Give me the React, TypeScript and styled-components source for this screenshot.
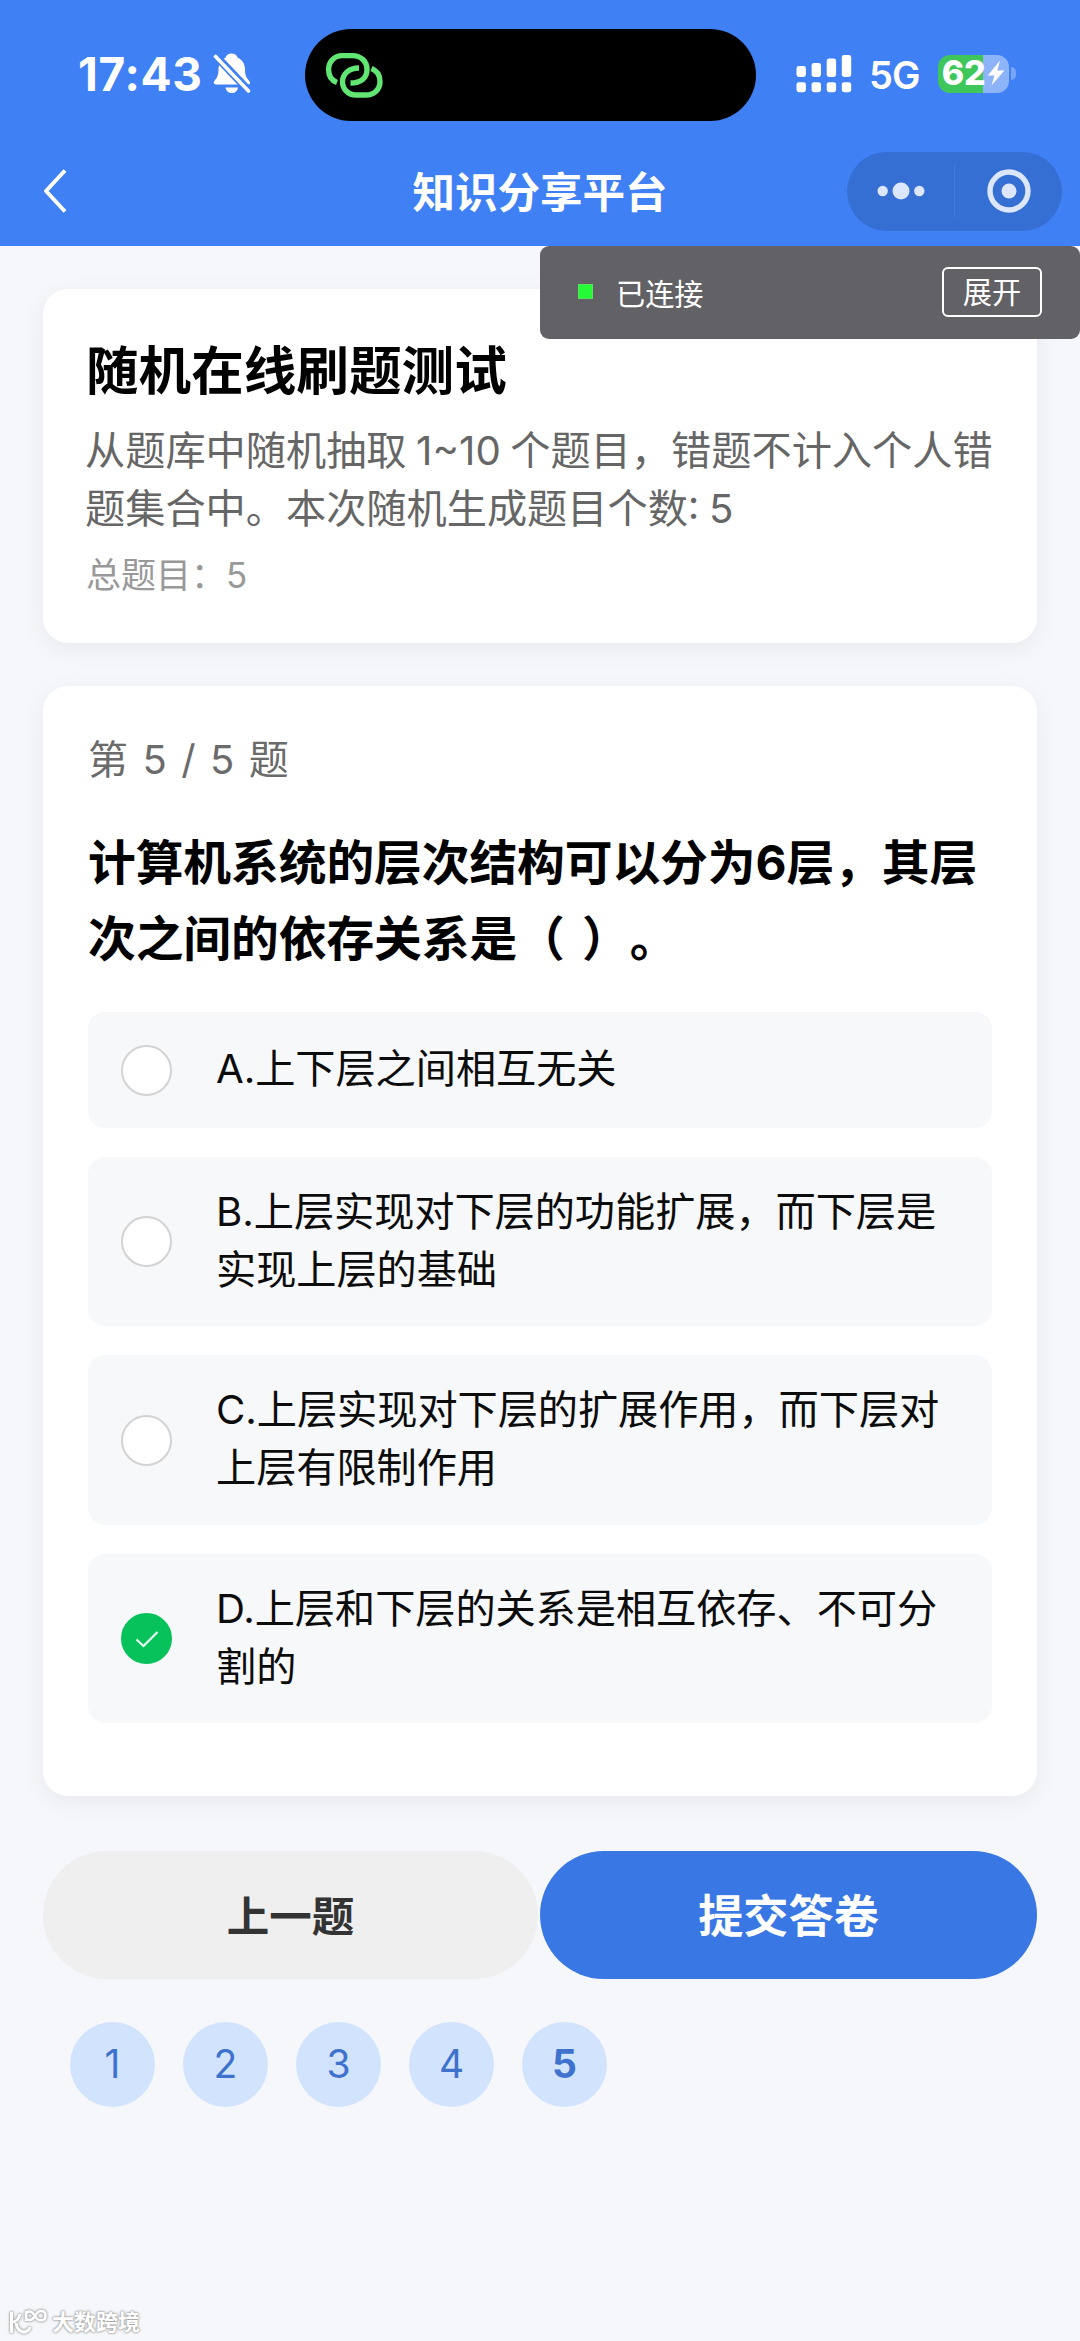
import React, { useState } from 'react';
import styled, { createGlobalStyle, css } from 'styled-components';

const GlobalStyle = createGlobalStyle`
  *, *::before, *::after { box-sizing: border-box; }
  body {
    margin: 0;
    background: #f5f7fb;
    font-family: Inter, "Noto Sans CJK SC", sans-serif;
    color: #000;
    text-spacing-trim: space-all;
  }
  button { font: inherit; border: 0; padding: 0; margin: 0; cursor: pointer; }
  svg { display: block; flex: none; }
`;

const Page = styled.div`
  position: relative;
  display: flex;
  flex-direction: column;
  width: 1080px;
  height: 2341px;
  overflow: hidden;
  background: #f5f7fb;
`;

const Header = styled.header`
  display: flex;
  flex-direction: column;
  flex: none;
  height: 246px;
  background: #3f80f5;
  color: #fff;
`;

const StatusBar = styled.div`
  display: flex;
  align-items: center;
  height: 147px;
  padding-left: 78px;
`;

const Clock = styled.div`
  width: 135px;
  font-size: 46px;
  font-weight: 700;
  line-height: 54px;
  letter-spacing: 0.7px;
  white-space: nowrap;
`;

const Island = styled.div`
  display: flex;
  align-items: center;
  width: 451px;
  height: 92px;
  margin: 2px 40px 0 54px;
  padding-left: 20px;
  border-radius: 46px;
  background: #000;
`;

const Network = styled.div`
  width: 52px;
  margin: 2px 0 0 17px;
  font-size: 38px;
  font-weight: 600;
  line-height: 46px;
  letter-spacing: -1px;
`;

const Battery = styled.div`
  display: flex;
  align-items: center;
  justify-content: center;
  gap: 2px;
  width: 71px;
  height: 38px;
  margin-left: 17px;
  padding-bottom: 1px;
  border-radius: 12px;
  background: linear-gradient(90deg, #3fc65b 0 45px, #8db3f8 45px);
  font-size: 34px;
  font-weight: 800;
  letter-spacing: -0.3px;
  line-height: 38px;
`;

const BatteryNub = styled.div`
  width: 5px;
  height: 13px;
  margin-left: 2px;
  border-radius: 0 6px 6px 0;
  background: #78a5f7;
`;

const NavBar = styled.div`
  display: grid;
  grid-template-columns: 1fr auto 1fr;
  align-items: center;
  height: 88px;
  padding: 0 18px 0 42px;
`;

const BackButton = styled.button`
  justify-self: start;
  background: none;
  color: inherit;
`;

const NavTitle = styled.h1`
  margin: 3px 0 0 -24px;
  font-size: 42.5px;
  font-weight: 700;
  line-height: 60px;
`;

const Capsule = styled.div`
  display: flex;
  align-items: center;
  justify-self: end;
  width: 215px;
  height: 79px;
  border-radius: 40px;
  background: #366fd3;
`;

const CapsuleHalf = styled.button`
  display: flex;
  flex: 1;
  align-items: center;
  justify-content: center;
  background: none;
  color: #dce6fc;
`;

const CapsuleDivider = styled.div`
  width: 1px;
  height: 54px;
  background: #4379d8;
`;

const DebugPanel = styled.div`
  position: absolute;
  top: 246px;
  right: 0;
  display: flex;
  align-items: center;
  width: 540px;
  height: 93px;
  padding: 0 38px;
  border-radius: 9px;
  background: #626166;
  color: #fff;
  font-size: 29.2px;
  line-height: 40px;
`;

const StatusSquare = styled.i`
  width: 15px;
  height: 15px;
  margin: -3px 23px 0 0;
  background: #24fa36;
  border: 1px solid #56e35e;
`;

const StatusText = styled.span`
  flex: 1;
  margin-top: 5px;
`;

const ExpandButton = styled.button`
  width: 100px;
  height: 50px;
  margin-top: -2px;
  padding-top: 2px;
  border: 2px solid #fff;
  border-radius: 6px;
  background: none;
  color: #fff;
`;

const Card = styled.section<{ $height: number; $top: number }>`
  flex: none;
  height: ${(p) => p.$height}px;
  margin: ${(p) => p.$top}px 43px 0;
  border-radius: 25px;
  background: #fff;
  box-shadow: 0 6px 24px rgba(0, 0, 0, 0.06);
`;

const SummaryCard = styled(Card)`
  padding: 42px 43px;
`;

const SummaryTitle = styled.h2`
  margin: 0;
  font-size: 52.6px;
  font-weight: 700;
  line-height: 80px;
`;

const SummaryText = styled.p`
  margin: 11px 0 0 -1px;
  color: #666;
  font-size: 40.2px;
  line-height: 57.6px;
  word-spacing: -1.7px;
  white-space: pre;
`;

const SummaryTotal = styled.p`
  margin: 14px 0 0;
  color: #999;
  font-size: 35px;
  line-height: 48px;
`;

const QuestionCard = styled(Card)`
  padding: 46px 45px 0;
`;

const Progress = styled.div`
  color: #6b6b6b;
  font-size: 40px;
  line-height: 56px;
  word-spacing: 3.2px;
`;

const Question = styled.h3`
  margin: 37px 0 0;
  font-size: 47.8px;
  font-weight: 700;
  line-height: 76px;
  letter-spacing: -0.12px;
  word-spacing: 6px;
  white-space: pre;
`;

const OptionList = styled.div`
  display: flex;
  flex-direction: column;
  gap: 29px;
  margin-top: 35px;
`;

const Option = styled.label`
  display: flex;
  align-items: center;
  min-height: 116px;
  padding: 26px 0 28px 33px;
  border-radius: 17px;
  background: #f7f8fa;
  cursor: pointer;
`;

const Radio = styled.span<{ $checked: boolean }>`
  display: flex;
  align-items: center;
  justify-content: center;
  flex: none;
  width: 51px;
  height: 51px;
  margin: 2px 44px 0 0;
  border: 2px solid #d3d3d3;
  border-radius: 50%;
  background: #fff;
  ${(p) => p.$checked && css`
    border-color: #07c25b;
    background: #07c25b;
  `}
`;

const HiddenInput = styled.input`
  display: none;
`;

const OptionText = styled.span`
  color: #0c0c0d;
  font-size: 40.2px;
  line-height: 57.7px;
  letter-spacing: -0.05px;
  white-space: pre;
`;

const Actions = styled.div`
  display: grid;
  grid-template-columns: 495px 497px;
  justify-content: space-between;
  flex: none;
  margin: 55px 43px 0;
`;

const ActionButton = styled.button<{ $primary?: boolean }>`
  height: 128px;
  padding-bottom: 4px;
  border-radius: 64px;
  background: ${(p) => (p.$primary ? '#3977e5' : '#efefef')};
  color: ${(p) => (p.$primary ? '#fff' : '#333')};
  font-size: ${(p) => (p.$primary ? 45.2 : 42.5)}px;
  font-weight: 700;
`;

const Pager = styled.nav`
  display: flex;
  gap: 28px;
  margin: 43px 0 0 70px;
`;

const PageDot = styled.button<{ $active: boolean }>`
  width: 85px;
  height: 85px;
  padding-bottom: 2px;
  border-radius: 50%;
  background: #d2e3fe;
  color: #3e72cd;
  font-size: 39px;
  font-weight: ${(p) => (p.$active ? 700 : 400)};
`;

const Watermark = styled.footer`
  display: flex;
  align-items: center;
  gap: 4px;
  margin: auto 0 2px 8px;
  color: #fff;
  font-size: 22px;
  font-weight: 700;
  line-height: 34px;
  text-shadow: 0 0 2px #999, 0 0 2px #aaa, 0 0 3px #bbb;
  svg { filter: drop-shadow(0 0 1px #999) drop-shadow(0 0 1px #bbb); }
`;

const BellOff = () => (
  <svg width="38" height="41" viewBox="0 0 38 41">
    <path
      d="M18.5 0.5c3.4 0 5.6 1.8 6.2 4.2 4.8 2 7.3 6.4 7.3 11.8 0 6 1.5 8.300 4.300 11.500 1.500 1.800.700 3.500-1.300 3.500H3C.8 31.500 0 29.500 1.500 27.800 4.300 24.500 5.500 22 5.500 16.500c0-5.400 2.300-9.800 7-11.800C13 2.300 15.200.5 18.500.5z"
      fill="#fff"
    />
    <path d="M12.500 34.500h12.500c-.5 3.500-3 5.500-6.200 5.500s-5.800-2-6.300-5.500z" fill="#fff" />
    <path d="M0 0 L38 40" stroke="#3f80f5" strokeWidth="8" />
    <path d="M2.500 3.500 L35.500 38" stroke="#fff" strokeWidth="3.600" strokeLinecap="round" />
  </svg>
);

const LinkRings = () => (
  <svg width="58" height="46" viewBox="0 0 58 46" fill="none" stroke="#62e673" strokeWidth="5.400">
    <path d="M12 30.500C6.500 28.500 3.600 23.500 3.600 17.500C3.600 9.500 9.500 3.600 17 3.600H27.500C36 3.600 42 9.500 42 17.500C42 26 36 31 25.500 31" />
    <path d="M34 16C24 16 17.500 22 17.500 29.500C17.500 37.500 23.500 43 31 43H41C49.500 43 55 37 55 29.500C55 23 51.500 18.500 46.500 16.500" />
  </svg>
);

const SIGNAL_TOPS = [11, 8, 3.5, 0];

const Signal = () => (
  <svg width="56" height="38" viewBox="0 0 56 38" fill="#fff">
    {SIGNAL_TOPS.map((top, i) => (
      <g key={top}>
        <rect x={i * 15.1 + 0.5} y={top} width="9.400" height={22 - top} rx="2.400" />
        <rect x={i * 15.1 + 0.5} y="27.200" width="9.400" height="10" rx="2.400" />
      </g>
    ))}
  </svg>
);

const Bolt = () => (
  <svg width="18" height="26" viewBox="0 0 18 26">
    <path d="M13 0.500 L0.800 15.500 H7.500 L4.500 25.500 L17.300 10.500 H10.300 Z" fill="#fff" />
  </svg>
);

const ChevronBack = () => (
  <svg width="26" height="46" viewBox="0 0 26 46">
    <path d="M23 2.500 L4 23 L23 43.500" fill="none" stroke="#fff" strokeWidth="4" strokeLinejoin="round" />
  </svg>
);

const MoreDots = () => (
  <svg width="48" height="20" viewBox="0 0 48 20" fill="currentColor">
    <circle cx="5.700" cy="10" r="5.200" />
    <circle cx="24" cy="10" r="8.500" />
    <circle cx="42.300" cy="10" r="5.200" />
  </svg>
);

const TargetIcon = () => (
  <svg width="44" height="44" viewBox="0 0 44 44">
    <circle cx="22" cy="22" r="19" fill="none" stroke="currentColor" strokeWidth="5.400" />
    <circle cx="22" cy="22" r="7.500" fill="currentColor" />
  </svg>
);

const Check = () => (
  <svg width="24" height="18" viewBox="0 0 24 18">
    <path d="M1.500 9.500 L8.500 16 L22.500 2" fill="none" stroke="#e9fff0" strokeWidth="2.200" />
  </svg>
);

const WatermarkLogo = () => (
  <svg width="40" height="28" viewBox="0 0 40 28" fill="none" stroke="#fff" strokeWidth="3">
    <path d="M3.500 4V25M4 14C8 14 11 10.500 12 6" />
    <path d="M8 15C9 22 14 25 18 23.500C20 22.700 21.500 21 22 19" />
    <path d="M18 3V13M27 8C25 4.500 23.500 3.500 21.500 3.500C19 3.500 18 5.500 18 8C18 10.500 19.500 12 21.500 12C24 12 25.500 10.500 27 8C28.500 5 30.500 3 33 3C36 3 37.500 5 37.500 7.700C37.500 10.500 35.700 12.300 33 12.300C30.500 12.300 28.500 11 27 8Z" strokeWidth="2.500" />
  </svg>
);

const OPTIONS = [
  { key: 'A', text: 'A.上下层之间相互无关' },
  { key: 'B', text: 'B.上层实现对下层的功能扩展，而下层是\n实现上层的基础' },
  { key: 'C', text: 'C.上层实现对下层的扩展作用，而下层对\n上层有限制作用' },
  { key: 'D', text: 'D.上层和下层的关系是相互依存、不可分\n割的' },
];

const PAGES = [1, 2, 3, 4, 5];

export default function App() {
  const [answer, setAnswer] = useState('D');
  const [current, setCurrent] = useState(5);

  return (
    <>
      <GlobalStyle />
      <Page>
        <Header>
          <StatusBar>
            <Clock>17:43</Clock>
            <BellOff />
            <Island>
              <LinkRings />
            </Island>
            <Signal />
            <Network>5G</Network>
            <Battery>
              62
              <Bolt />
            </Battery>
            <BatteryNub />
          </StatusBar>
          <NavBar>
            <BackButton aria-label="返回">
              <ChevronBack />
            </BackButton>
            <NavTitle>知识分享平台</NavTitle>
            <Capsule>
              <CapsuleHalf aria-label="更多">
                <MoreDots />
              </CapsuleHalf>
              <CapsuleDivider />
              <CapsuleHalf aria-label="关闭">
                <TargetIcon />
              </CapsuleHalf>
            </Capsule>
          </NavBar>
        </Header>

        <SummaryCard $top={43} $height={354}>
          <SummaryTitle>随机在线刷题测试</SummaryTitle>
          <SummaryText>{'从题库中随机抽取 1~10 个题目，错题不计入个人错\n题集合中。本次随机生成题目个数: 5'}</SummaryText>
          <SummaryTotal>总题目：5</SummaryTotal>
        </SummaryCard>

        <QuestionCard $top={43} $height={1110}>
          <Progress>{`第 ${current} / 5 题`}</Progress>
          <Question>{'计算机系统的层次结构可以分为6层，其层\n次之间的依存关系是（ ）。'}</Question>
          <OptionList>
            {OPTIONS.map((option) => (
              <Option key={option.key}>
                <HiddenInput
                  type="radio"
                  name="answer"
                  checked={answer === option.key}
                  onChange={() => setAnswer(option.key)}
                />
                <Radio $checked={answer === option.key}>{answer === option.key && <Check />}</Radio>
                <OptionText>{option.text}</OptionText>
              </Option>
            ))}
          </OptionList>
        </QuestionCard>

        <Actions>
          <ActionButton>上一题</ActionButton>
          <ActionButton $primary>提交答卷</ActionButton>
        </Actions>

        <Pager>
          {PAGES.map((page) => (
            <PageDot key={page} $active={page === current} onClick={() => setCurrent(page)}>
              {page}
            </PageDot>
          ))}
        </Pager>

        <Watermark>
          <WatermarkLogo />
          大数跨境
        </Watermark>

        <DebugPanel>
          <StatusSquare />
          <StatusText>已连接</StatusText>
          <ExpandButton>展开</ExpandButton>
        </DebugPanel>
      </Page>
    </>
  );
}
